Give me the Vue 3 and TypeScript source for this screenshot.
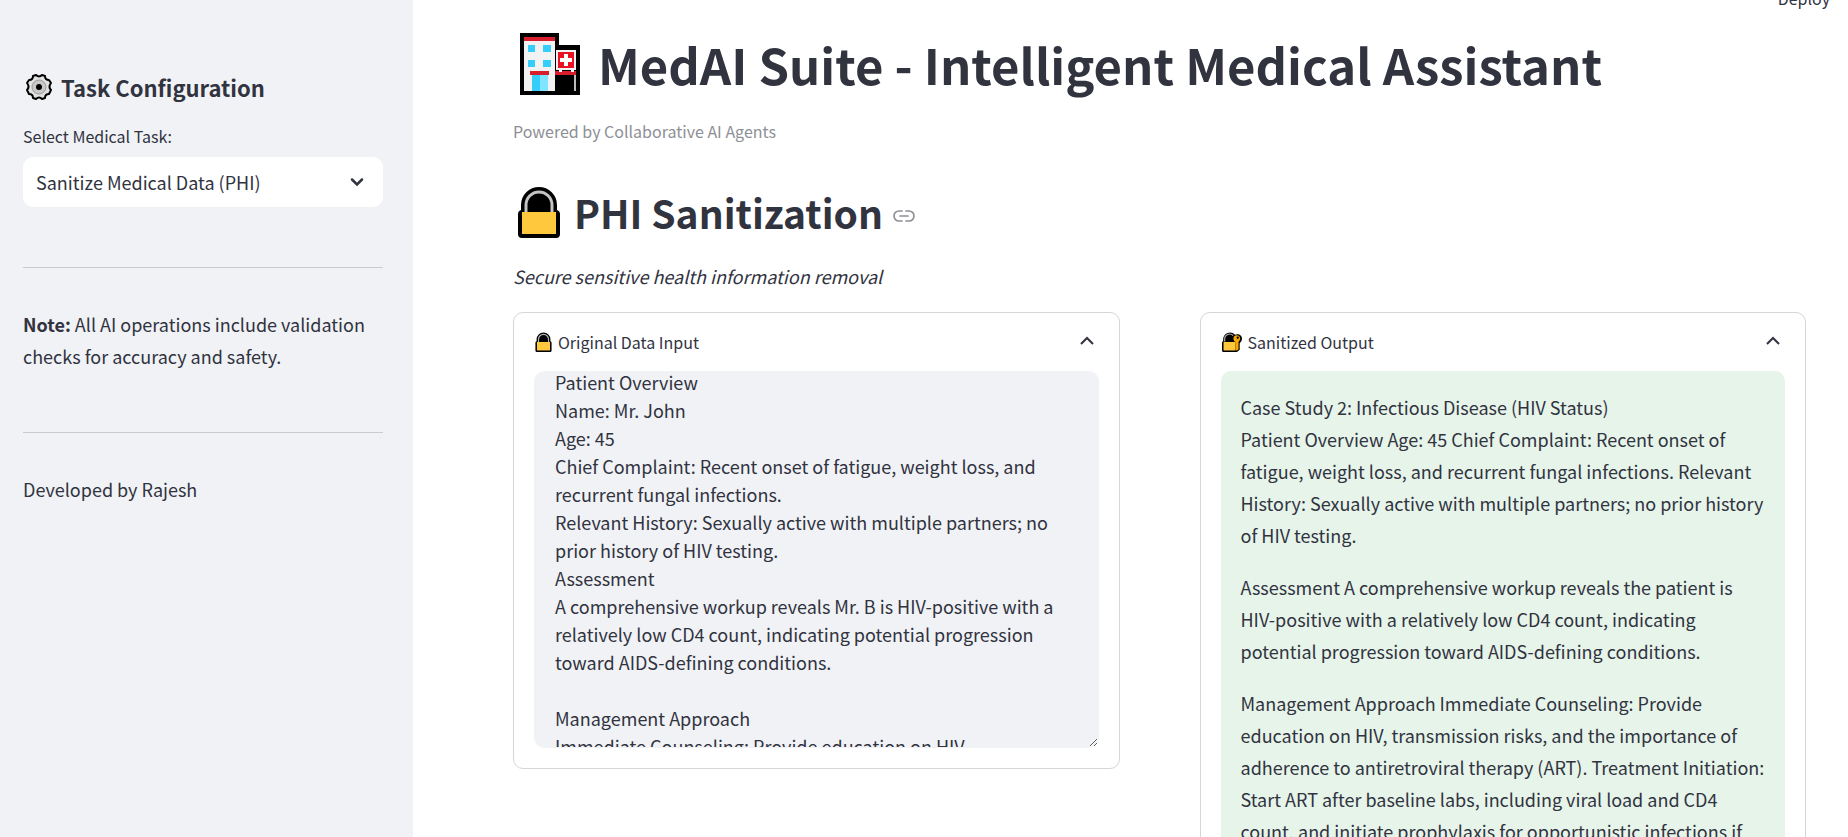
<script setup lang="ts">
import { ref, onMounted } from 'vue'

const tasks = ['Sanitize Medical Data (PHI)', 'Summarize Medical Text', 'Write and Refine Research Article']
const task = ref(tasks[0])
const inputOpen = ref(true)
const outputOpen = ref(true)
const area = ref<HTMLTextAreaElement | null>(null)

const original = ref(`Case Study 2: Infectious Disease (HIV Status)
Patient Overview
Name: Mr. John
Age: 45
Chief Complaint: Recent onset of fatigue, weight loss, and recurrent fungal infections.
Relevant History: Sexually active with multiple partners; no prior history of HIV testing.
Assessment
A comprehensive workup reveals Mr. B is HIV-positive with a relatively low CD4 count, indicating potential progression toward AIDS-defining conditions.

Management Approach
Immediate Counseling: Provide education on HIV,
transmission risks, and the importance of adherence to antiretroviral therapy (ART).`)

const sanitized: string[] = [
  'Case Study 2: Infectious Disease (HIV Status)\nPatient Overview Age: 45 Chief Complaint: Recent onset of fatigue, weight loss, and recurrent fungal infections. Relevant History: Sexually active with multiple partners; no prior history of HIV testing.',
  'Assessment A comprehensive workup reveals the patient is HIV-positive with a relatively low CD4 count, indicating potential progression toward AIDS-defining conditions.',
  'Management Approach Immediate Counseling: Provide education on HIV, transmission risks, and the importance of adherence to antiretroviral therapy (ART). Treatment Initiation: Start ART after baseline labs, including viral load and CD4 count, and initiate prophylaxis for opportunistic infections if',
]

onMounted(() => {
  if (area.value) area.value.scrollTop = 52
})
</script>

<template>
  <div class="app">
    <aside class="sidebar">
      <h3 class="side-title">
        <svg class="gear" viewBox="0 0 28 28" aria-hidden="true">
          <path d="M11 2Q14 5 17 2L20 3Q20 7 24 7L26 10Q23 14 26 17L24 21Q20 21 20 25L17 26Q14 23 11 26L8 25Q8 21 4 21L2 17Q5 14 2 10L4 7Q8 7 8 3Z" fill="#e2e2e2" stroke="#000" stroke-width="2" stroke-linejoin="round" />
          <circle cx="14" cy="14" r="7" fill="#c9c9c9" stroke="#9a9a9a" />
          <circle cx="14" cy="14" r="3" fill="#000" />
        </svg>
        Task Configuration
      </h3>
      <label class="field-label" for="task">Select Medical Task:</label>
      <div class="select-wrap">
        <select id="task" v-model="task">
          <option v-for="t in tasks" :key="t">{{ t }}</option>
        </select>
        <svg class="select-arrow" viewBox="0 0 14 10" aria-hidden="true">
          <path d="M2 2.500l5 5 5-5" fill="none" stroke="#31333f" stroke-width="2.500" stroke-linecap="round" />
        </svg>
      </div>
      <hr />
      <p><strong>Note:</strong> All AI operations include validation checks for accuracy and safety.</p>
      <hr />
      <p>Developed by Rajesh</p>
    </aside>

    <div class="page">
      <header class="toolbar"><button type="button" class="deploy">Deploy</button></header>
      <main>
        <h1>
          <svg class="hospital" viewBox="0 0 60 62" aria-hidden="true">
            <path d="M0 0h39v12h21v50H0z" fill="#000" />
            <path d="M4 8h31v50H4z" fill="#f2f2f2" />
            <path d="M4 4h31v4H4z" fill="#d81e2c" />
            <path d="M8 12h7v7H8zM23 12h8v7h-8zM8 27h7v7H8zM23 27h8v7h-8z" fill="#35cdf9" />
            <path d="M12 42h16v16H12z" fill="#7fe6ff" />
            <path d="M12 42h8v16h-8z" fill="#35cdf9" />
            <path d="M10 38h19v4H10zM35 38h21v4H35z" fill="#d81e2c" />
            <path d="M54 42h2v16h-2z" fill="#bbb" />
            <path d="M36 17h20v20h-2v2h-3v-2h-9v2h-3v-2h-3z" fill="#f2f2f2" />
            <path d="M38 19h16v16H38z" fill="#e81224" />
            <path d="M44 21h4v4h4v4h-4v4h-4v-4h-4v-4h4z" fill="#fff" />
          </svg>
          MedAI Suite - Intelligent Medical Assistant
        </h1>
        <p class="caption">Powered by Collaborative AI Agents</p>
        <h2>
          <svg class="lock" viewBox="0 0 42 52" aria-hidden="true">
            <path d="M3 24V19a18 18 0 0 1 36 0v5q3 1 3 4v20q0 4-4 4H4q-4 0-4-4V28q0-3 3-4z" fill="#000" />
            <path d="M8 26V19a13 13 0 0 1 26 0v7" fill="none" stroke="#c4c4c4" stroke-width="3" />
            <path d="M4 26h34v22H4z" fill="#ffc83d" />
          </svg>
          PHI Sanitization
          <a class="anchor" href="#phi-sanitization" aria-label="Link to section">
            <svg viewBox="0 0 22 12" aria-hidden="true">
              <path d="M9 1H6a5 5 0 0 0 0 10h3M13 1h3a5 5 0 0 1 0 10h-3M7 6h8" fill="none" stroke="#8d8f96" stroke-width="1.700" stroke-linecap="round" />
            </svg>
          </a>
        </h2>
        <p class="subtitle">Secure sensitive health information removal</p>

        <div class="columns">
          <section class="card">
            <button type="button" class="card-head" :aria-expanded="inputOpen" @click="inputOpen = !inputOpen">
              <svg class="lock-small" viewBox="0 0 42 52" aria-hidden="true">
                <path d="M3 24V19a18 18 0 0 1 36 0v5q3 1 3 4v20q0 4-4 4H4q-4 0-4-4V28q0-3 3-4z" fill="#000" />
                <path d="M8 26V19a13 13 0 0 1 26 0v7" fill="none" stroke="#b4b4b4" stroke-width="3" />
                <path d="M4 26h34v22H4z" fill="#ffc83d" />
              </svg>
              <span id="input-label">Original Data Input</span>
              <svg class="chevron" viewBox="0 0 14 14" aria-hidden="true">
                <path d="M1 9l6-6 6 6" fill="none" stroke="#31333f" stroke-width="2" />
              </svg>
            </button>
            <textarea v-show="inputOpen" ref="area" v-model="original" aria-labelledby="input-label" spellcheck="false"></textarea>
          </section>

          <section class="card">
            <button type="button" class="card-head" :aria-expanded="outputOpen" @click="outputOpen = !outputOpen">
              <svg class="lock-key" viewBox="0 0 52 52" aria-hidden="true">
                <path d="M3 24V19a18 18 0 0 1 31-12q4-2 9-1 9 3 9 12 0 7-6 11v17l-7 6H4q-4 0-4-4V28q0-3 3-4z" fill="#000" />
                <path d="M7 25V19a13 13 0 0 1 22-10" fill="none" stroke="#b4b4b4" stroke-width="3" />
                <path d="M4 26h31v22H4z" fill="#ffc83d" />
                <path d="M31 12q6-6 13-2 7 7-1 16v19l-5 4-3-3V27q-8-6-4-15z" fill="#f5a800" />
                <circle cx="41" cy="15" r="3" fill="#000" />
              </svg>
              <span>Sanitized Output</span>
              <svg class="chevron" viewBox="0 0 14 14" aria-hidden="true">
                <path d="M1 9l6-6 6 6" fill="none" stroke="#31333f" stroke-width="2" />
              </svg>
            </button>
            <div v-show="outputOpen" class="result">
              <p v-for="(text, i) in sanitized" :key="i">{{ text }}</p>
            </div>
          </section>
        </div>
      </main>
    </div>
  </div>
</template>

<style>
html,
body {
  height: 100%;
  overflow: hidden;
}
#app {
  height: 100%;
}
</style>

<style scoped>
.app {
  display: flex;
  height: 100%;
  overflow: hidden;
  background: #fff;
  color: #31333f;
  font: 18px/32px "Noto Sans CJK SC", "Noto Sans", sans-serif;
}
.app * {
  box-sizing: border-box;
}
p,
h1,
h2,
h3 {
  margin: 0;
}
button,
select,
textarea {
  font: inherit;
  color: inherit;
}
button {
  border: 0;
  padding: 0;
  background: none;
  cursor: pointer;
}
.sidebar {
  flex: 0 0 413px;
  padding: 71px 30px 0 23px;
  background: #f0f2f6;
}
.side-title {
  display: flex;
  align-items: center;
  gap: 8px;
  padding-left: 2px;
  font-size: 22px;
  font-weight: 600;
  line-height: 32px;
}
.gear {
  width: 28px;
  height: 28px;
}
.field-label {
  display: block;
  margin-top: 20px;
  font-size: 16px;
  line-height: 26px;
}
.select-wrap {
  position: relative;
  margin-top: 8px;
}
select {
  display: block;
  width: 100%;
  height: 50px;
  padding: 0 40px 0 13px;
  border: 0;
  border-radius: 10px;
  background: #fff;
  appearance: none;
}
.select-arrow {
  position: absolute;
  right: 19px;
  top: 20px;
  width: 14px;
  height: 10px;
  pointer-events: none;
}
hr {
  height: 1px;
  margin: 60px 0 40px;
  border: 0;
  background: #c9cbd1;
}
.page {
  flex: 1;
  min-width: 0;
  overflow: hidden;
}
.toolbar {
  display: flex;
  justify-content: flex-end;
  align-items: flex-end;
  height: 11px;
  padding-right: 18px;
}
.deploy {
  font-size: 16px;
  line-height: 26px;
}
main {
  padding: 17px 42px 0 100px;
}
h1 {
  display: flex;
  align-items: center;
  gap: 18px;
  padding-left: 7px;
  font-size: 49px;
  font-weight: 700;
  line-height: 72px;
}
.hospital {
  width: 60px;
  height: 62px;
}
.caption {
  margin-top: 18px;
  font-size: 16px;
  line-height: 26px;
  color: #8d8f96;
}
h2 {
  display: flex;
  align-items: center;
  padding-left: 5px;
  margin-top: 40px;
  font-size: 39px;
  font-weight: 600;
  line-height: 56px;
}
.lock {
  width: 42px;
  height: 52px;
  margin-right: 14px;
}
.anchor {
  display: flex;
  padding-top: 8px;
  margin-left: 10px;
}
.anchor svg {
  width: 22px;
  height: 12px;
}
.subtitle {
  margin-top: 20px;
  font-style: italic;
}
.columns {
  display: grid;
  grid-template-columns: 1fr 1fr;
  align-items: start;
  gap: 80px;
  margin-top: 20px;
}
.card {
  padding: 0 20px 20px;
  border: 1px solid #d6d6d9;
  border-radius: 10px;
}
.card-head {
  display: flex;
  align-items: center;
  gap: 6px;
  width: 100%;
  height: 58px;
  padding: 0 5px 0 1px;
  font-size: 16px;
}
.lock-small {
  width: 17px;
  height: 20px;
}
.lock-key {
  width: 20px;
  height: 20px;
}
.chevron {
  width: 14px;
  height: 14px;
  margin-left: auto;
}
textarea {
  display: block;
  width: 100%;
  height: 377px;
  padding: 20px;
  border: 1px solid #f0f2f6;
  border-radius: 10px;
  background: #f0f2f6;
  line-height: 28px;
  resize: vertical;
  outline: 0;
  scrollbar-width: none;
}
.result {
  display: grid;
  gap: 20px;
  padding: 20px;
  border-radius: 10px;
  background: #e6f4ea;
}
.result p {
  white-space: pre-line;
}
</style>
